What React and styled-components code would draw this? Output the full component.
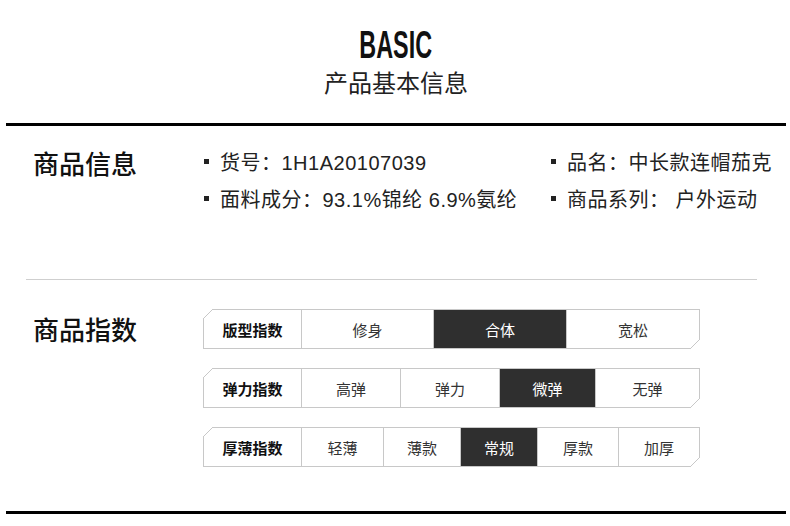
import styled, { createGlobalStyle } from "styled-components";

const GlobalStyle = createGlobalStyle`
  body {
    margin: 0;
    background: #fff;
    font-family: "Liberation Sans", "Noto Sans CJK SC", sans-serif;
    color: #222;
  }
`;

const infoItems = [
  "货号：1H1A20107039",
  "品名：中长款连帽茄克",
  "面料成分：93.1%锦纶 6.9%氨纶",
  "商品系列： 户外运动",
];

const indexRows = [
  {
    label: "版型指数",
    cells: [
      { text: "修身", w: 132 },
      { text: "合体", w: 133, on: true },
      { text: "宽松", w: 134 },
    ],
  },
  {
    label: "弹力指数",
    cells: [
      { text: "高弹", w: 99 },
      { text: "弹力", w: 99 },
      { text: "微弹", w: 96, on: true },
      { text: "无弹", w: 105 },
    ],
  },
  {
    label: "厚薄指数",
    cells: [
      { text: "轻薄", w: 82 },
      { text: "薄款", w: 77 },
      { text: "常规", w: 77, on: true },
      { text: "厚款", w: 81 },
      { text: "加厚", w: 82 },
    ],
  },
];

export default function App() {
  return (
    <Page>
      <GlobalStyle />
      <Header>
        <Title>BASIC</Title>
        <Subtitle>产品基本信息</Subtitle>
      </Header>
      <Rule />
      <InfoSection>
        <SectionLabel>商品信息</SectionLabel>
        <InfoList>
          {infoItems.map((item) => (
            <InfoItem key={item}>
              <Bullet />
              <span>{item}</span>
            </InfoItem>
          ))}
        </InfoList>
      </InfoSection>
      <Divider />
      <IndexSection>
        <SectionLabel>商品指数</SectionLabel>
        <Tables>
          {indexRows.map((row) => (
            <IndexRow key={row.label}>
              <LabelCell>{row.label}</LabelCell>
              {row.cells.map((c) => (
                <Cell key={c.text} $w={c.w} $on={c.on}>
                  {c.text}
                </Cell>
              ))}
            </IndexRow>
          ))}
        </Tables>
      </IndexSection>
      <Rule />
    </Page>
  );
}

const Page = styled.div`
  width: 790px;
  height: 526px;
  padding: 0 4px 0 6px;
  box-sizing: border-box;
  overflow: hidden;
`;

const Header = styled.header`
  display: flex;
  flex-direction: column;
  align-items: center;
  padding-top: 24px;
  height: 123px;
  box-sizing: border-box;
`;

const Title = styled.h1`
  margin: 0;
  font-family: "Liberation Sans", sans-serif;
  font-weight: 700;
  font-size: 39px;
  line-height: 42px;
  transform: scaleX(0.6);
  color: #111;
`;

const Subtitle = styled.div`
  margin-top: 1px;
  font-family: "Noto Sans CJK SC", sans-serif;
  font-size: 24px;
  line-height: 30px;
  color: #222;
`;

const Rule = styled.div`
  height: 3px;
  background: #000;
`;

const InfoSection = styled.section`
  display: flex;
  align-items: flex-start;
  padding: 17px 0 0 27px;
  height: 153px;
  box-sizing: border-box;
`;

const SectionLabel = styled.div`
  width: 170px;
  flex: none;
  margin-top: ${(p) => p.$shift || 0}px;
  font-family: "Noto Sans CJK SC", sans-serif;
  font-weight: 500;
  font-size: 26px;
  line-height: 40px;
  color: #111;
`;

const InfoList = styled.div`
  display: grid;
  grid-template-columns: 347px auto;
  padding-left: 1px;
`;

const InfoItem = styled.div`
  display: flex;
  align-items: center;
  gap: 11px;
  height: 37px;
  font-family: "Liberation Sans", "Noto Sans CJK SC", sans-serif;
  font-size: 20px;
  letter-spacing: 0.5px;
  color: #222;
  white-space: nowrap;
`;

const Bullet = styled.i`
  width: 5px;
  height: 5px;
  background: #222;
  flex: none;
`;

const Divider = styled.div`
  height: 1px;
  background: #cfcfcf;
  margin: 0 29px 0 20px;
`;

const IndexSection = styled.section`
  display: flex;
  align-items: flex-start;
  padding: 29px 0 0 27px;
  height: 231px;
  box-sizing: border-box;
`;

const Tables = styled.div`
  display: flex;
  flex-direction: column;
  gap: 19px;
`;

const IndexRow = styled.div`
  position: relative;
  display: flex;
  width: 497px;
  height: 40px;
  box-sizing: border-box;
  border: 1px solid #c8c8c8;
  font-family: "Noto Sans CJK SC", sans-serif;
  font-size: 15px;

  &::before,
  &::after {
    content: "";
    position: absolute;
    width: 10px;
    height: 10px;
  }
  &::before {
    top: -1px;
    left: -1px;
    background: linear-gradient(
      135deg,
      #fff 0 calc(50% - 0.7px),
      #c8c8c8 calc(50% - 0.7px) calc(50% + 0.7px),
      transparent calc(50% + 0.7px)
    );
  }
  &::after {
    bottom: -1px;
    right: -1px;
    background: linear-gradient(
      135deg,
      transparent 0 calc(50% - 0.7px),
      #c8c8c8 calc(50% - 0.7px) calc(50% + 0.7px),
      #fff calc(50% + 0.7px)
    );
  }
`;

const LabelCell = styled.div`
  width: 97px;
  flex: none;
  display: flex;
  align-items: center;
  justify-content: center;
  font-weight: 700;
  color: #111;
`;

const Cell = styled.div`
  width: ${(p) => p.$w}px;
  flex: none;
  box-sizing: border-box;
  display: flex;
  align-items: center;
  justify-content: center;
  border-left: 1px solid #c8c8c8;
  background: ${(p) => (p.$on ? "#2f2f2f" : "#fff")};
  color: ${(p) => (p.$on ? "#fff" : "#333")};
  &:last-child {
    flex: 1;
  }
`;
